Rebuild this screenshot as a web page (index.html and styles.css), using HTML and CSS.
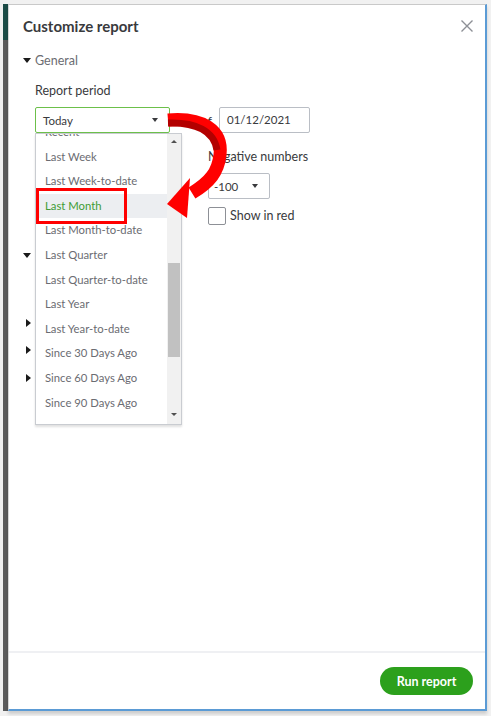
FILE: index.html
```html
<!DOCTYPE html>
<html lang="en">
<head>
    <meta charset="UTF-8">
    <meta name="viewport" content="width=device-width, initial-scale=1.0">
    <title>Customize report</title>
    <link rel="stylesheet" href="styles.css">
</head>
<body>
    <div class="screen">
        <div class="app-edge"></div>

        <div class="dialog">
            <div class="dialog-head">
                <h2 class="dialog-title">Customize report</h2>
                <button class="close" aria-label="Close">
                    <svg width="12" height="12" viewBox="0 0 12 12"><path d="M0.5 0.5 L11.5 11.5 M11.5 0.5 L0.5 11.5" stroke="#8d9096" stroke-width="1.4" fill="none"/></svg>
                </button>
            </div>

            <div class="dialog-body">
                <div class="section">
                    <div class="section-toggle"><span class="tri-down"></span><span class="toggle-text">General</span></div>
                    <div class="section-content">
                        <div class="field-label">Report period</div>
                        <div class="period-row">
                            <div class="select period-select"><span>Today</span><span class="select-caret"></span></div>
                            <span class="of-label">of</span>
                            <div class="input date-input">01/12/2021</div>
                        </div>
                        <div class="general-grid">
                            <div class="col-left"></div>
                            <div class="col-right">
                                <div class="field-label">Negative numbers</div>
                                <div class="select neg-select"><span>-100</span><span class="select-caret"></span></div>
                                <label class="check"><span class="check-box"></span>Show in red</label>
                            </div>
                        </div>
                    </div>
                </div>

                <!-- collapsed groups sit under the open menu, only the toggles show -->
                <div class="section rows-section">
                    <div class="section-toggle dark"><span class="tri-down"></span></div>
                    <div class="section-content columns-slot"></div>
                </div>
                <div class="section closed">
                    <div class="section-toggle dark"><span class="tri-right"></span></div>
                </div>
                <div class="section closed">
                    <div class="section-toggle dark"><span class="tri-right"></span></div>
                </div>
                <div class="section closed last">
                    <div class="section-toggle dark"><span class="tri-right"></span></div>
                </div>
            </div>

            <div class="dialog-foot">
                <button class="btn-run">Run report</button>
            </div>

            <!-- open period menu, scrolled a little past the top -->
            <div class="period-menu">
                <ul class="menu-list">
                    <li class="first">Recent</li>
                    <li>Last Week</li>
                    <li>Last Week-to-date</li>
                    <li class="hover">Last Month</li>
                    <li>Last Month-to-date</li>
                    <li>Last Quarter</li>
                    <li>Last Quarter-to-date</li>
                    <li>Last Year</li>
                    <li>Last Year-to-date</li>
                    <li>Since 30 Days Ago</li>
                    <li>Since 60 Days Ago</li>
                    <li>Since 90 Days Ago</li>
                </ul>
                <div class="menu-scroll">
                    <span class="scroll-up"></span>
                    <span class="scroll-thumb"></span>
                    <span class="scroll-down"></span>
                </div>
            </div>

            <!-- callout -->
            <div class="callout-box"></div>
            <svg class="callout-arrow" width="90" height="140" viewBox="0 0 90 140">
                <path d="M8,20 C42,17 63,30 60,55 C58,72 50,82 32,93" stroke="#ff0000" stroke-width="13" fill="none"/>
                <path d="M8,23 C36,22 54,31 57,50" stroke="#b30000" stroke-width="7" fill="none"/>
                <polygon points="7,104 30,78 27,118" fill="#ff0000"/>
            </svg>
        </div>
    </div>
</body>
</html>
```

FILE: styles.css
```css
* {
    margin: 0;
    padding: 0;
    box-sizing: border-box;
}

body {
    font-family: Lato, "Open Sans", sans-serif;
    background: #f1f1f1;
    color: #393a3d;
    width: 491px;
    height: 716px;
    overflow: hidden;
}

.screen {
    display: flex;
    padding-top: 4px;
}

.app-edge {
    width: 5px;
    height: 707px;
    margin-left: 3px;
    background: linear-gradient(to bottom, #1c4c47 0, #1c4c47 36px, #5c5c5c 36px);
}

.dialog {
    position: relative;
    width: 479px;
    height: 707px;
    background: #fff;
    border-top: 1px solid #c9c9c9;
    border-left: 1px solid #d6d6d6;
    border-right: 2px solid #5b9bd5;
    border-bottom: 2px solid #5b9bd5;
    box-shadow: 0 3px 3px rgba(0, 0, 0, 0.15);
    display: flex;
    flex-direction: column;
}

.dialog-head {
    display: flex;
    align-items: center;
    justify-content: space-between;
    padding: 11px 12px 0 14px;
}

.dialog-title {
    font-size: 15px;
    font-weight: 700;
    line-height: 20px;
    color: #393a3d;
}

.close {
    border: none;
    background: none;
    width: 12px;
    height: 12px;
    display: flex;
}

.dialog-body {
    flex: 1;
    padding: 0 14px;
}

.section-toggle {
    display: flex;
    align-items: center;
    height: 18px;
    margin-top: 15px;
    font-size: 12.5px;
    color: #6b6c72;
}

.tri-down {
    width: 0;
    height: 0;
    border-left: 4.5px solid transparent;
    border-right: 4.5px solid transparent;
    border-top: 5px solid #1a1a1a;
    margin-right: 4px;
}

.tri-right {
    width: 0;
    height: 0;
    border-top: 4.5px solid transparent;
    border-bottom: 4.5px solid transparent;
    border-left: 5px solid #1a1a1a;
    margin-left: 3px;
    margin-right: 4px;
}

.section-content {
    padding-left: 12px;
}

.field-label {
    font-size: 12.5px;
    line-height: 18px;
    color: #393a3d;
}

.section-content > .field-label {
    margin-top: 13px;
}

.period-row {
    display: flex;
    align-items: center;
    margin-top: 7px;
}

.select {
    display: flex;
    align-items: center;
    justify-content: space-between;
    height: 26px;
    border: 1px solid #babec5;
    border-radius: 2px;
    font-size: 11.5px;
    color: #393a3d;
    padding: 0 11px 0 7px;
}

.select-caret {
    width: 0;
    height: 0;
    border-left: 3.5px solid transparent;
    border-right: 3.5px solid transparent;
    border-top: 4px solid #393a3d;
}

.period-select {
    width: 135px;
    border-color: #6cc04a;
}

.of-label {
    font-size: 12px;
    margin-left: 31px;
    width: 18px;
}

.input {
    height: 26px;
    border: 1px solid #babec5;
    border-radius: 2px;
    font-size: 11.5px;
    line-height: 24px;
    padding-left: 7px;
}

.date-input {
    width: 91px;
}

.general-grid {
    display: flex;
    margin-top: 15px;
}

.col-left {
    width: 173px;
}

.neg-select {
    width: 62px;
    margin-top: 7px;
    padding-left: 5px;
}

.check {
    display: flex;
    align-items: center;
    margin-top: 8px;
    font-size: 12.5px;
    line-height: 18px;
}

.check-box {
    width: 18px;
    height: 18px;
    border: 1px solid #8d9096;
    border-radius: 2px;
    margin-right: 4px;
}

.rows-section .section-toggle {
    margin-top: 21px;
}

.columns-slot {
    height: 41px;
}

.section.closed .section-toggle {
    margin-top: 9px;
}

.section.last .section-toggle {
    margin-top: 10px;
}

.dialog-foot {
    display: flex;
    justify-content: flex-end;
    border-top: 2px solid #eff0f3;
    padding: 14px 12px 14px 0;
}

.btn-run {
    width: 93px;
    height: 28px;
    border: none;
    border-radius: 14px;
    background: #2ca01c;
    color: #fff;
    font-family: Lato, "Open Sans", sans-serif;
    font-size: 12.5px;
    font-weight: 700;
}

/* dropdown menu */
.period-menu {
    position: absolute;
    left: 26px;
    top: 128px;
    width: 147px;
    height: 292px;
    background: #fff;
    border: 1px solid #c9ccd1;
    box-shadow: 0 2px 2px rgba(0, 0, 0, 0.12);
    overflow: hidden;
    display: flex;
}

.menu-list {
    list-style: none;
    flex: 1;
}

.menu-list li {
    height: 24.6px;
    line-height: 24.6px;
    padding-left: 9px;
    font-size: 11.3px;
    color: #6b6c72;
    white-space: nowrap;
}

.menu-list li.first {
    margin-top: -13.9px;
}

.menu-list li.hover {
    background: #eceef1;
    color: #3f9c35;
}

.menu-scroll {
    position: relative;
    width: 14px;
    background: #f1f1f1;
}

.scroll-up,
.scroll-down {
    position: absolute;
    left: 4px;
    width: 0;
    height: 0;
    border-left: 3px solid transparent;
    border-right: 3px solid transparent;
}

.scroll-up {
    top: 6px;
    border-bottom: 3px solid #505050;
}

.scroll-down {
    bottom: 8px;
    border-top: 3px solid #505050;
}

.scroll-thumb {
    position: absolute;
    left: 1px;
    right: 1px;
    top: 129px;
    height: 94px;
    background: #c1c1c1;
}

/* red callout */
.callout-box {
    position: absolute;
    left: 27px;
    top: 183px;
    width: 91px;
    height: 36px;
    border: 3px solid #ff0000;
}

.callout-arrow {
    position: absolute;
    left: 151px;
    top: 95px;
}
```
